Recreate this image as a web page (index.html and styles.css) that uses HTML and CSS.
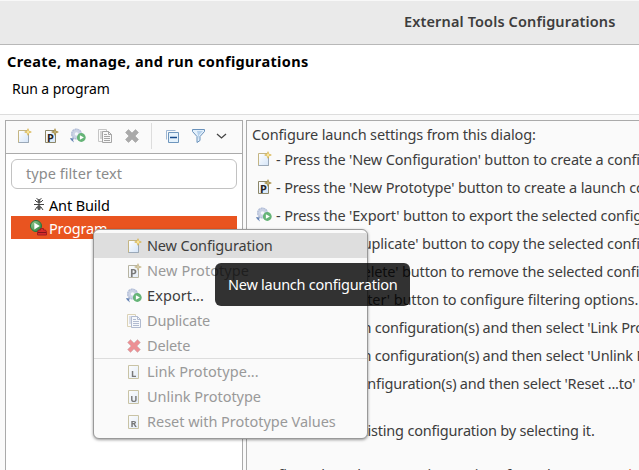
FILE: index.html
```html
<!DOCTYPE html>
<html lang="en"><head><meta charset="utf-8"><title>External Tools Configurations</title><link rel="stylesheet" href="styles.css"></head>
<body>
<svg class="defs" width="0" height="0">
<defs>
<linearGradient id="paper" x1="0" y1="0" x2="1" y2="1"><stop offset="0" stop-color="#fff"/><stop offset="1" stop-color="#d5e5f8"/></linearGradient>
<linearGradient id="ball" x1="0" y1="0" x2="1" y2="1"><stop offset="0" stop-color="#9fd196"/><stop offset="1" stop-color="#227a35"/></linearGradient>
<symbol id="spark" viewBox="0 0 7 7"><path d="M3.5 0 4.5 2.500 7 3.500 4.500 4.500 3.500 7 2.500 4.500 0 3.500 2.500 2.500Z" fill="#d5ae42"/><path d="M3.500 2v3M2 3.500h3" stroke="#fff3b8"/></symbol>
<symbol id="new" viewBox="0 0 16 16"><path d="M2.500 2.500h10v12h-10z" fill="url(#paper)" stroke="#c4b583"/><path d="M12.500 7v7.500h-10" fill="none" stroke="#9aa8b8"/><use href="#spark" x="8" y="0" width="8" height="8"/></symbol>
<symbol id="proto" viewBox="0 0 16 16"><path d="M2.500 2.500h10v12h-10z" fill="url(#paper)" stroke="#8c8769"/><text class="glyph big" x="4" y="13.500">P</text><g class="dark"><use href="#spark" x="8" y="0" width="8" height="8"/></g></symbol>
<symbol id="export" viewBox="0 0 16 16"><circle cx="6.500" cy="6" r="5.500" fill="#cbd3e5"/><circle cx="6.500" cy="6" r="4.700" fill="none" stroke="#b4bfd7" stroke-width="1.500" stroke-dasharray="1.500 1"/><circle cx="6.500" cy="6" r="1.800" fill="#f5f7fc"/><path d="M0 10l4 .5-1 1.500 1 2.500L1 12z" fill="#6684b5"/><circle cx="11.300" cy="9.500" r="4.400" fill="#65b477"/><path d="m9.900 7.200 4 2.300-4 2.300z" fill="#fff"/></symbol>
<symbol id="copy" viewBox="0 0 16 16"><path d="M1.500 1.500h8v12h-8z" fill="#fafafa" stroke="#c7b98a"/><path d="M3 4h4M3 6h4M3 8h4M3 10h4" stroke="#90a0bd"/><path d="M5.500 3.500h6l3 3v8h-9z" fill="#f5f8fd" stroke="#8192b5"/><path d="M11.500 3.500v3h3M7 8.500h6M7 10.500h6M7 12.500h6M7 6.500h3" fill="none" stroke="#8192b5"/></symbol>
<symbol id="delete" viewBox="0 0 16 16"><path d="m1.500 4.500 3-3L8 5l3.500-3.500 3 3L11 8l3.500 3.500-3 3L8 11l-3.500 3.500-3-3L5 8z" fill="currentColor" stroke="#777" stroke-opacity=".3"/></symbol>
<symbol id="letter" viewBox="0 0 16 16"><path d="M2.500 1.500h10v13h-10z" fill="url(#paper)" stroke="#aaa06e"/></symbol>
</defs></svg>
<header class="titlebar">External Tools Configurations</header>
<section class="banner"><h1>Create, manage, and run configurations</h1><p>Run a program</p></section>
<main class="panes">
<aside class="sidebar">
<nav class="toolbar">
<svg class="icon"><use href="#new"/></svg><svg class="icon"><use href="#proto"/></svg><svg class="icon"><use href="#export"/></svg><svg class="icon gray"><use href="#copy"/></svg><svg class="icon cross"><use href="#delete"/></svg>
<span class="divider"></span>
<svg class="icon" viewBox="0 0 16 16"><path d="M2.500 11.500v-9h9" fill="none" stroke="#9db7d4"/><path d="M4.500 4.500h10v10h-10z" fill="#e5f2fc" stroke="#6e96bd"/><path d="M6 9.500h7" stroke="#174a8c" stroke-width="1.500"/></svg>
<svg class="icon filter" viewBox="0 0 16 16"><path d="M1.500 1.500h12v2l-4.500 5v4l-3 2v-6l-4.500-5z" fill="#e3f0fb" stroke="#6991bb"/><path d="M6 3h6L8 7v5z" fill="#b5d0eb"/></svg>
<svg class="icon chevron" viewBox="0 0 16 16"><path d="m3 6 4.500 4L12 6" fill="none" stroke="#444" stroke-width="1.300"/></svg>
</nav>
<div class="search">type filter text</div>
<div class="tree"><div class="node"><svg class="icon" viewBox="0 0 16 16"><path d="M8 3v10M4 3l2 2h4l2-2M3 7.500h10M4 13l2-3h4l2 3M5.500 1.500 8 3l2.500-1.500" fill="none" stroke="#444"/><ellipse cx="8" cy="4.500" rx="1.500" ry="1.700" fill="#555"/><ellipse cx="8" cy="10.500" rx="1.800" ry="2.500" fill="#555"/></svg><span>Ant Build</span></div>
<div class="node selected"><svg class="icon program" viewBox="0 0 17 16"><circle cx="6" cy="6" r="5.500" fill="url(#ball)" stroke="#24743b"/><path d="m4.300 2.700 5.500 3.300-5.500 3.500z" fill="#fff"/><path d="M10.500 10V8.500h3V10h2l1 2v3h-9v-3l1-2z" fill="#d72c2b" stroke="#a41d21"/><path d="M8 12.500h8" stroke="#84161b"/></svg><span>Program</span></div></div>
</aside>
<article class="details">
<p>Configure launch settings from this dialog:</p>
<ul class="help">
<li><svg class="icon"><use href="#new"/></svg><span>- Press the 'New Configuration' button to create a configuration of the selected type.</span></li>
<li><svg class="icon"><use href="#proto"/></svg><span>- Press the 'New Prototype' button to create a launch configuration prototype.</span></li>
<li><svg class="icon"><use href="#export"/></svg><span>- Press the 'Export' button to export the selected configurations.</span></li>
<li><svg class="icon"></svg><span>- Press the 'Duplicate' button to copy the selected configuration.</span></li>
<li><svg class="icon"></svg><span>- Press the 'Delete' button to remove the selected configuration.</span></li>
<li><svg class="icon"></svg><span class="filtering">- Press the 'Filter' button to configure filtering options.</span></li>
<li><svg class="icon"></svg><span class="select">- Select launch configuration(s) and then select 'Link Prototype' menu item.</span></li>
<li><svg class="icon"></svg><span class="select">- Select launch configuration(s) and then select 'Unlink Prototype' menu item.</span></li>
<li><svg class="icon"></svg><span class="select">- Select the configuration(s) and then select 'Reset ...to' menu item.</span></li>
</ul>
<p class="edit">Edit or view an existing configuration by selecting it.</p>
<p class="last">Configure launch perspective settings from the <a>'Perspectives'</a> preference page.</p>
</article>
</main>
<menu class="popup">
<li class="hover"><svg class="icon"><use href="#new"/></svg><span>New Configuration</span></li>
<li class="off"><svg class="icon"><use href="#proto"/></svg><span class="wide">New Prototype</span></li>
<li><svg class="icon"><use href="#export"/></svg><span class="wide">Export...</span></li>
<li class="off"><svg class="icon"><use href="#copy"/></svg><span>Duplicate</span></li>
<li class="off"><svg class="icon red"><use href="#delete"/></svg><span>Delete</span></li>
<li class="off group"><svg class="icon"><use href="#letter"/><text class="glyph" x="5" y="13">L</text></svg><span class="wide">Link Prototype...</span></li>
<li class="off"><svg class="icon"><use href="#letter"/><text class="glyph" x="4.200" y="13">U</text></svg><span class="loose">Unlink Prototype</span></li>
<li class="off"><svg class="icon"><use href="#letter"/><text class="glyph" x="4.500" y="13">R</text></svg><span class="loose">Reset with Prototype Values</span></li>
</menu>
<div class="tooltip">New launch configuration</div>
</body></html>
```
FILE: styles.css
```css
*{box-sizing:border-box}
body{margin:0;width:639px;height:470px;overflow:hidden;background:#fafafa;color:#3d3d3d;font:14.5px/20px "Noto Sans",sans-serif;letter-spacing:-.15px;white-space:nowrap}
p,h1,ul,menu{margin:0;padding:0;list-style:none}
.defs{position:absolute}
.icon{width:16px;height:16px;flex:none;display:block}
.glyph{font:bold 9.5px "Noto Sans",sans-serif;fill:#222;letter-spacing:0}
.big{font-size:11px}
.dark{filter:brightness(.75)}
.titlebar{height:45px;border-top:1px solid #f8f8f8;border-bottom:1px solid #b8b8b8;background:#eaeaea;padding:10px 0 0 404px;font-size:14.5px;font-weight:600;letter-spacing:.13px}
.banner{height:70px;background:#fff;border-bottom:1px solid #ddd;color:#000;padding:6px 7px}
.banner h1{font:bold 14.5px/20px "Noto Sans",sans-serif;letter-spacing:.35px}
.banner p{padding:8px 0 0 5px;font-size:14px;letter-spacing:-.08px}
.panes{display:flex;gap:3px;padding:5px 0 0 5px;height:355px}
.sidebar{width:238px;border:1px solid #aaa;border-bottom:0;background:#fff}
.toolbar{height:33px;background:#fafafa;border-bottom:1px solid #aaa;display:flex;align-items:center;padding:0 0 2px 10px;gap:11px}
.gray{filter:grayscale(1);opacity:.8}.cross{color:#aaa}.red{color:#e34b51}
.divider{height:26px;border-left:1px solid #ddd;margin-right:1px}
.filter{margin-left:0}.chevron{margin-left:-4px}
.search{height:30px;margin:5px 5px 4px;border:1px solid #c2c2c2;border-radius:6px;padding:3px 14px;color:#8b8b8b;letter-spacing:.05px}
.tree{padding:0 5px;color:#000}
.node{height:23px;display:flex;align-items:center;padding-left:20px;gap:2px}
.node .program{width:17px;margin-left:-1px}
.selected{background:#e95420;color:#fff}
.details{flex:1;border:1px solid #aaa;border-right:0;border-bottom:0;padding:3px 0 0 5px;overflow:hidden}
.help{margin-top:1px}
.help li{height:28px;display:flex;align-items:center;gap:4px;padding-left:4px}
.filtering{letter-spacing:-.12px}
.select{letter-spacing:-.2px}
.edit{margin-top:23px;letter-spacing:-.19px}
.last{margin-top:24px;letter-spacing:-.18px}.last a{color:#e95420}
.popup{position:absolute;left:93px;top:229px;width:275px;height:210px;background:#fafafa;border:1px solid #999;border-radius:6px;padding:3px 0;box-shadow:0 1px 3px #0006}
.popup li{height:25px;display:flex;align-items:center;padding-left:32px;gap:5px}
.popup span{padding-bottom:2px}
.loose{letter-spacing:-.03px}.wide{letter-spacing:.08px}
.hover{background:#dedede}.off{color:#999}.off .icon{opacity:.6}
.popup .group{height:26px;border-top:1px solid #ddd}
.tooltip{position:absolute;left:215px;top:263px;width:195px;height:43px;border-radius:6px;background:#000000cc;color:#fff;padding:11px 13px;letter-spacing:-.25px}
```
